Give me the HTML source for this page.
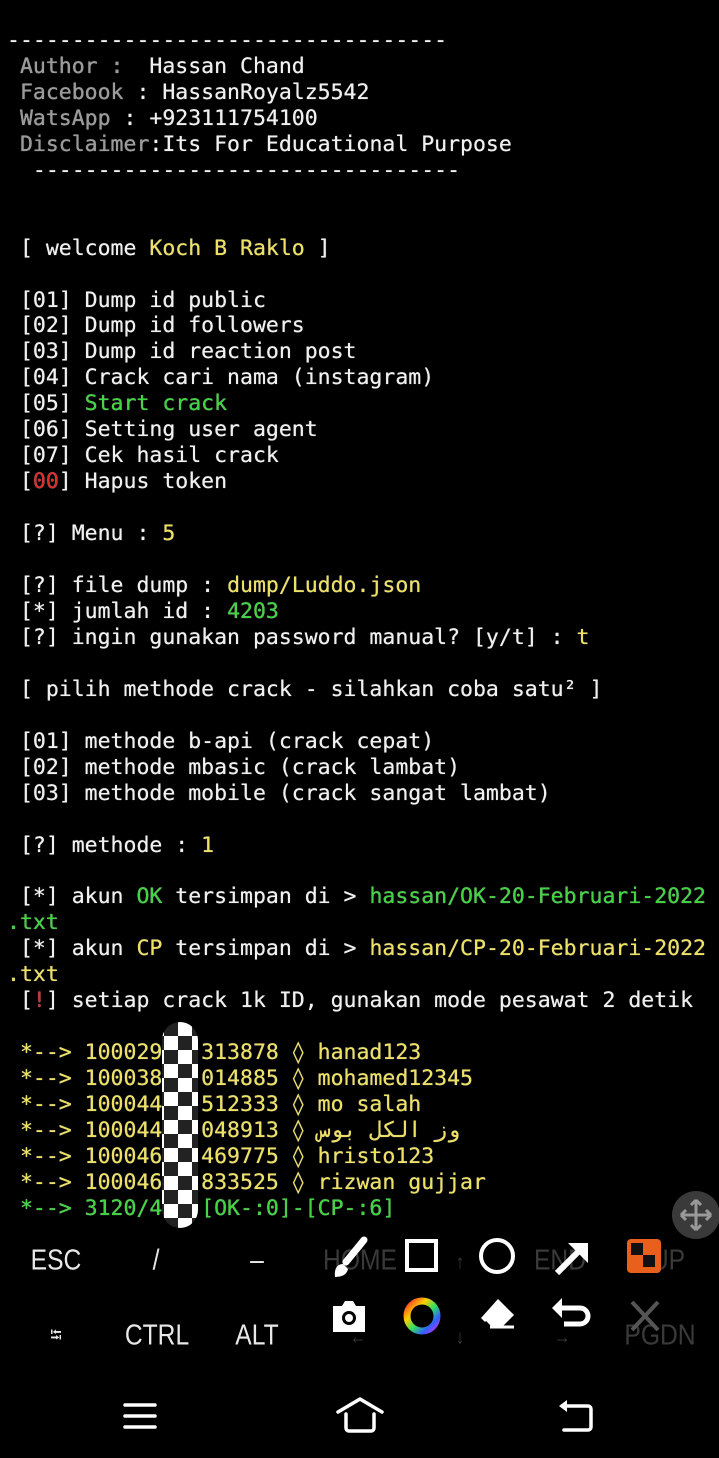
<!DOCTYPE html>
<html><head><meta charset="utf-8"><style>
html,body{margin:0;padding:0;background:#000;width:719px;height:1458px;overflow:hidden;position:relative}
pre{position:absolute;left:7px;top:28px;margin:0;font-family:"DejaVu Sans Mono","Liberation Mono",monospace;font-size:21.5px;line-height:25.95px;color:#f0f0f0;white-space:pre;text-shadow:0 0 0.6px #fff}
.g{color:#9a9a9a}.y{color:#eee060}.gr{color:#3ed63e}.r{color:#e22828}
.k{position:absolute;font-family:"Liberation Sans",sans-serif;font-size:29px;color:#e8e8e8;transform:translate(-50%,-50%) scaleX(0.85);transform-origin:center;white-space:nowrap}
.dim{color:#3a3a3a}
svg{position:absolute}
</style></head><body>
<pre>----------------------------------
<span class="g"> Author :</span>  Hassan Chand
<span class="g"> Facebook</span> : HassanRoyalz5542
<span class="g"> WatsApp</span> : +923111754100
<span class="g"> Disclaimer</span>:Its For Educational Purpose
  ---------------------------------


 [ welcome <span class="y">Koch B Raklo</span> ]

 [01] Dump id public
 [02] Dump id followers
 [03] Dump id reaction post
 [04] Crack cari nama (instagram)
 [05] <span class="gr">Start crack</span>
 [06] Setting user agent
 [07] Cek hasil crack
 [<span class="r">00</span>] Hapus token

 [?] Menu : <span class="y">5</span>

 [?] file dump : <span class="y">dump/Luddo.json</span>
 [*] jumlah id : <span class="gr">4203</span>
 [?] ingin gunakan password manual? [y/t] : <span class="y">t</span>

 [ pilih methode crack - silahkan coba satu² ]

 [01] methode b-api (crack cepat)
 [02] methode mbasic (crack lambat)
 [03] methode mobile (crack sangat lambat)

 [?] methode : <span class="y">1</span>

 [*] akun <span class="gr">OK</span> tersimpan di &gt; <span class="gr">hassan/OK-20-Februari-2022</span>
<span class="gr">.txt</span>
 [*] akun <span class="y">CP</span> tersimpan di &gt; <span class="y">hassan/CP-20-Februari-2022</span>
<span class="y">.txt</span>
 [<span class="r">!</span>] setiap crack 1k ID, gunakan mode pesawat 2 detik

<span class="y"> *--&gt; 100029   313878 ◊ hanad123
 *--&gt; 100038   014885 ◊ mohamed12345
 *--&gt; 100044   512333 ◊ mo salah
 *--&gt; 100044   048913 ◊ وز الكل بوس
 *--&gt; 100046   469775 ◊ hristo123
 *--&gt; 100046   833525 ◊ rizwan gujjar</span>
<span class="gr"> *--&gt; 3120/4   [OK-:0]-[CP-:6]</span></pre>

<svg style="left:162px;top:1022px" width="36" height="206" viewBox="0 0 36 206">
<defs><pattern id="ck" width="28" height="28" patternUnits="userSpaceOnUse" x="2"><rect width="28" height="28" fill="#fff"/><rect width="14" height="14" fill="#222"/><rect x="14" y="14" width="14" height="14" fill="#222"/></pattern></defs>
<rect x="0" y="0" width="36" height="206" rx="18" fill="url(#ck)"/></svg>

<svg style="left:670px;top:1190px" width="50" height="50"><circle cx="26" cy="25" r="24" fill="#3a3a3a"/><path d="M26 10v30M11 25h30M26 10l-5 5M26 10l5 5M26 40l-5-5M26 40l5-5M11 25l5-5M11 25l5 5M41 25l-5-5M41 25l-5 5" stroke="#999" stroke-width="3" fill="none"/></svg>

<div class="k" style="left:56px;top:1261px">ESC</div>
<div class="k" style="left:156px;top:1261px">/</div>
<div class="k" style="left:257px;top:1261px">–</div>
<div class="k dim" style="left:360px;top:1261px">HOME</div>
<div class="k dim" style="left:460px;top:1263px;font-size:20px">↑</div>
<div class="k dim" style="left:560px;top:1261px">END</div>
<div class="k dim" style="left:668px;top:1261px">UP</div>
<div class="k" style="left:56px;top:1338px;font-size:18px">⭾</div>
<div class="k" style="left:157px;top:1336px">CTRL</div>
<div class="k" style="left:257px;top:1336px">ALT</div>
<div class="k dim" style="left:358px;top:1338px;font-size:20px">←</div>
<div class="k dim" style="left:460px;top:1338px;font-size:20px">↓</div>
<div class="k dim" style="left:562px;top:1338px;font-size:20px">→</div>
<div class="k dim" style="left:660px;top:1336px">PGDN</div>

<svg style="left:330px;top:1236px" width="40" height="44"><path d="M34 4L16 26" stroke="#fff" stroke-width="7" stroke-linecap="round"/><path d="M13 28c-6 0-9 5-8 13 6 0 12-2 13-8z" fill="#fff"/></svg>
<svg style="left:404px;top:1238px" width="36" height="36"><rect x="3" y="3" width="29" height="29" fill="none" stroke="#fff" stroke-width="4"/></svg>
<svg style="left:477px;top:1236px" width="40" height="40"><circle cx="20" cy="20" r="16" fill="none" stroke="#fff" stroke-width="4"/></svg>
<svg style="left:552px;top:1238px" width="40" height="40"><path d="M5 35L28 12" stroke="#fff" stroke-width="6"/><path d="M16 5h20v20z" fill="#fff"/></svg>
<svg style="left:626px;top:1238px" width="36" height="36"><rect x="1" y="1" width="34" height="34" rx="4" fill="#e8601c"/><rect x="5" y="5" width="12" height="12" fill="#111"/><rect x="17" y="17" width="12" height="12" fill="#111"/></svg>
<svg style="left:330px;top:1298px" width="38" height="36"><path d="M3 8h9l3-5h8l3 5h9v26H3z" fill="#fff"/><circle cx="19" cy="20" r="7" fill="#000"/><circle cx="19" cy="20" r="4" fill="#fff"/></svg>
<svg style="left:402px;top:1296px" width="40" height="40"><defs><linearGradient id="cw" x1="0" y1="0" x2="1" y2="1"><stop offset="0" stop-color="#ff3030"/><stop offset=".3" stop-color="#ffd000"/><stop offset=".55" stop-color="#30e060"/><stop offset=".8" stop-color="#3060ff"/><stop offset="1" stop-color="#d030ff"/></linearGradient></defs><circle cx="20" cy="20" r="15" fill="none" stroke="url(#cw)" stroke-width="7"/></svg>
<svg style="left:476px;top:1296px" width="42" height="40"><path d="M22 3l16 16-12 12H14L5 22z" fill="#fff"/><path d="M9 26l7 7" stroke="#000" stroke-width="3"/><path d="M14 31h24" stroke="#fff" stroke-width="3"/></svg>
<svg style="left:550px;top:1296px" width="42" height="40"><path d="M6 12h24a8 8 0 0 1 0 16H14" fill="none" stroke="#fff" stroke-width="5"/><path d="M2 12l10-10v20z" fill="#fff"/></svg>
<svg style="left:626px;top:1298px" width="36" height="36"><path d="M6 4l26 28M32 4L6 32" stroke="#555" stroke-width="4"/></svg>

<svg style="left:120px;top:1398px" width="40" height="36"><path d="M5 7h30M5 18h30M5 29h30" stroke="#fff" stroke-width="3.5" stroke-linecap="round"/></svg>
<svg style="left:334px;top:1396px" width="52" height="40"><path d="M4 16L26 3l22 13" fill="none" stroke="#fff" stroke-width="3.5" stroke-linecap="round" stroke-linejoin="round"/><path d="M12 18v14a3 3 0 0 0 3 3h22a3 3 0 0 0 3-3V18" fill="none" stroke="#fff" stroke-width="3.5" stroke-linecap="round"/></svg>
<svg style="left:556px;top:1398px" width="44" height="36"><path d="M10 8h22a3 3 0 0 1 3 3v18a3 3 0 0 1-3 3H8" fill="none" stroke="#fff" stroke-width="3.5" stroke-linecap="round"/><path d="M3 8l8-6v12z" fill="#fff"/></svg>
</body></html>
